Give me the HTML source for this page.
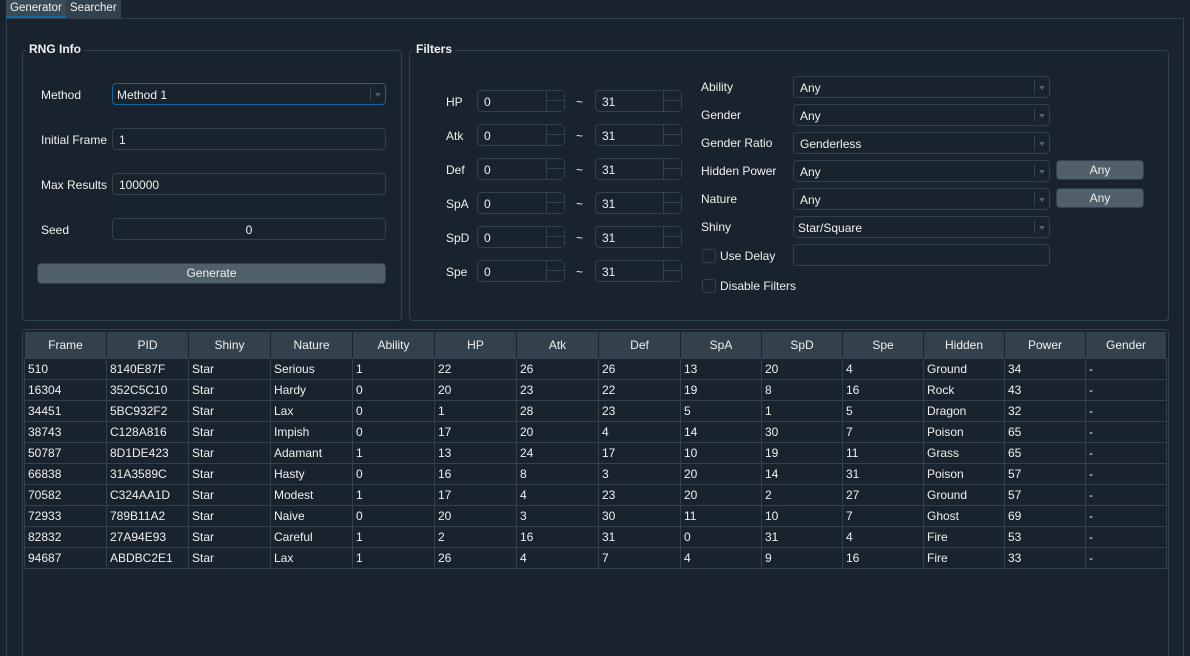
<!DOCTYPE html><html><head><style>
*{box-sizing:border-box;margin:0;padding:0}
html,body{width:1190px;height:656px;overflow:hidden}
body{background:#19232d;color:#f0f0f0;font:12px "Liberation Sans",sans-serif;position:relative}
.a{position:absolute}
.tab{position:absolute;top:0;height:18px;line-height:17px;padding:0 4px;background:#32414b;font-size:12px}
.grp{position:absolute;border:1px solid #32414b;border-radius:4px}
.gt{position:absolute;top:-9px;left:3px;background:#19232d;padding:0 3px;font-weight:bold;font-size:12px}
.in{position:absolute;border:1px solid #32414b;border-radius:4px;height:22px;line-height:22px;padding-left:6px;font-size:12px}
.lbl{position:absolute;font-size:12px;line-height:14px}
.dd::after{content:"";position:absolute;right:0;top:3px;width:14px;height:14px;border-left:1px solid #32414b}
.dd::before{content:"";position:absolute;right:4px;top:9px;border:3px solid transparent;border-top:4px solid #505f69}
.sp::after{content:"";position:absolute;right:0;top:0;width:17px;height:20px;border-left:1px solid #32414b;background:linear-gradient(#19232d 9px,#32414b 9px,#32414b 10px,#19232d 10px)}
.btn{position:absolute;background:#505f69;border:1px solid #32414b;border-radius:4px;text-align:center;font-size:12px}
.cb{position:absolute;width:14px;height:14px;border:1px solid #32414b;border-radius:3px}
table{border-collapse:collapse;position:absolute;left:24px;top:331px;table-layout:fixed}
td,th{border:1px solid #32414b;height:21px;font-size:12px;padding:0 3px;white-space:nowrap;text-align:left;font-weight:normal}
th{background:#32414b;height:27px;text-align:center;border-color:#19232d #19232d #32414b #19232d}
</style></head><body>
<div class="tab" style="left:6px;border-bottom:2px solid #1464a0;background:#3a4a56;font-size:11.5px">Generator</div>
<div class="tab" style="left:66px;font-size:11.5px">Searcher</div>
<div class="a" style="left:6px;top:18px;width:1178px;height:650px;border:1px solid #32414b"></div>

<div class="grp" style="left:22px;top:50px;width:380px;height:271px"><div class="gt">RNG Info</div></div>
<div class="lbl" style="left:41px;top:88px">Method</div>
<div class="in dd" style="left:112px;top:83px;width:274px;border-color:#1464a0;padding-left:4px">Method 1</div>
<div class="lbl" style="left:41px;top:133px">Initial Frame</div>
<div class="in" style="left:112px;top:128px;width:274px">1</div>
<div class="lbl" style="left:41px;top:178px">Max Results</div>
<div class="in" style="left:112px;top:173px;width:274px">100000</div>
<div class="lbl" style="left:41px;top:223px">Seed</div>
<div class="in" style="left:112px;top:218px;width:274px;text-align:center;padding:0">0</div>
<div class="btn" style="left:37px;top:263px;width:349px;height:21px;line-height:19px">Generate</div>

<div class="grp" style="left:409px;top:50px;width:760px;height:271px"><div class="gt">Filters</div></div>
<div class="lbl" style="left:446px;top:95px">HP</div>
<div class="lbl" style="left:446px;top:129px">Atk</div>
<div class="lbl" style="left:446px;top:163px">Def</div>
<div class="lbl" style="left:446px;top:197px">SpA</div>
<div class="lbl" style="left:446px;top:231px">SpD</div>
<div class="lbl" style="left:446px;top:265px">Spe</div>
<div class="in sp" style="left:477px;top:90px;width:88px">0</div><div class="lbl" style="left:576px;top:95px">~</div><div class="in sp" style="left:595px;top:90px;width:87px">31</div>
<div class="in sp" style="left:477px;top:124px;width:88px">0</div><div class="lbl" style="left:576px;top:129px">~</div><div class="in sp" style="left:595px;top:124px;width:87px">31</div>
<div class="in sp" style="left:477px;top:158px;width:88px">0</div><div class="lbl" style="left:576px;top:163px">~</div><div class="in sp" style="left:595px;top:158px;width:87px">31</div>
<div class="in sp" style="left:477px;top:192px;width:88px">0</div><div class="lbl" style="left:576px;top:197px">~</div><div class="in sp" style="left:595px;top:192px;width:87px">31</div>
<div class="in sp" style="left:477px;top:226px;width:88px">0</div><div class="lbl" style="left:576px;top:231px">~</div><div class="in sp" style="left:595px;top:226px;width:87px">31</div>
<div class="in sp" style="left:477px;top:260px;width:88px">0</div><div class="lbl" style="left:576px;top:265px">~</div><div class="in sp" style="left:595px;top:260px;width:87px">31</div>

<div class="lbl" style="left:701px;top:80px">Ability</div><div class="in dd" style="left:793px;top:76px;width:257px">Any</div>
<div class="lbl" style="left:701px;top:108px">Gender</div><div class="in dd" style="left:793px;top:104px;width:257px">Any</div>
<div class="lbl" style="left:701px;top:136px">Gender Ratio</div><div class="in dd" style="left:793px;top:132px;width:257px">Genderless</div>
<div class="lbl" style="left:701px;top:164px">Hidden Power</div><div class="in dd" style="left:793px;top:160px;width:257px">Any</div>
<div class="btn" style="left:1056px;top:160px;width:88px;height:20px;line-height:18px">Any</div>
<div class="lbl" style="left:701px;top:192px">Nature</div><div class="in dd" style="left:793px;top:188px;width:257px">Any</div>
<div class="btn" style="left:1056px;top:188px;width:88px;height:20px;line-height:18px">Any</div>
<div class="lbl" style="left:701px;top:220px">Shiny</div><div class="in dd" style="left:793px;top:216px;width:257px;padding-left:4px">Star/Square</div>
<div class="cb" style="left:702px;top:249px"></div><div class="lbl" style="left:720px;top:249px">Use Delay</div>
<div class="in" style="left:793px;top:244px;width:257px"></div>
<div class="cb" style="left:702px;top:279px"></div><div class="lbl" style="left:720px;top:279px">Disable Filters</div>

<div class="grp" style="left:22px;top:329px;width:1147px;height:340px"></div>
<table>
<colgroup><col style="width:82px"><col style="width:82px"><col style="width:82px"><col style="width:82px"><col style="width:82px"><col style="width:82px"><col style="width:82px"><col style="width:82px"><col style="width:81px"><col style="width:81px"><col style="width:81px"><col style="width:81px"><col style="width:81px"><col style="width:81px"></colgroup>
<tr><th>Frame</th><th>PID</th><th>Shiny</th><th>Nature</th><th>Ability</th><th>HP</th><th>Atk</th><th>Def</th><th>SpA</th><th>SpD</th><th>Spe</th><th>Hidden</th><th>Power</th><th>Gender</th></tr>
<tr><td>510</td><td>8140E87F</td><td>Star</td><td>Serious</td><td>1</td><td>22</td><td>26</td><td>26</td><td>13</td><td>20</td><td>4</td><td>Ground</td><td>34</td><td>-</td></tr>
<tr><td>16304</td><td>352C5C10</td><td>Star</td><td>Hardy</td><td>0</td><td>20</td><td>23</td><td>22</td><td>19</td><td>8</td><td>16</td><td>Rock</td><td>43</td><td>-</td></tr>
<tr><td>34451</td><td>5BC932F2</td><td>Star</td><td>Lax</td><td>0</td><td>1</td><td>28</td><td>23</td><td>5</td><td>1</td><td>5</td><td>Dragon</td><td>32</td><td>-</td></tr>
<tr><td>38743</td><td>C128A816</td><td>Star</td><td>Impish</td><td>0</td><td>17</td><td>20</td><td>4</td><td>14</td><td>30</td><td>7</td><td>Poison</td><td>65</td><td>-</td></tr>
<tr><td>50787</td><td>8D1DE423</td><td>Star</td><td>Adamant</td><td>1</td><td>13</td><td>24</td><td>17</td><td>10</td><td>19</td><td>11</td><td>Grass</td><td>65</td><td>-</td></tr>
<tr><td>66838</td><td>31A3589C</td><td>Star</td><td>Hasty</td><td>0</td><td>16</td><td>8</td><td>3</td><td>20</td><td>14</td><td>31</td><td>Poison</td><td>57</td><td>-</td></tr>
<tr><td>70582</td><td>C324AA1D</td><td>Star</td><td>Modest</td><td>1</td><td>17</td><td>4</td><td>23</td><td>20</td><td>2</td><td>27</td><td>Ground</td><td>57</td><td>-</td></tr>
<tr><td>72933</td><td>789B11A2</td><td>Star</td><td>Naive</td><td>0</td><td>20</td><td>3</td><td>30</td><td>11</td><td>10</td><td>7</td><td>Ghost</td><td>69</td><td>-</td></tr>
<tr><td>82832</td><td>27A94E93</td><td>Star</td><td>Careful</td><td>1</td><td>2</td><td>16</td><td>31</td><td>0</td><td>31</td><td>4</td><td>Fire</td><td>53</td><td>-</td></tr>
<tr><td>94687</td><td>ABDBC2E1</td><td>Star</td><td>Lax</td><td>1</td><td>26</td><td>4</td><td>7</td><td>4</td><td>9</td><td>16</td><td>Fire</td><td>33</td><td>-</td></tr>
</table>
</body></html>
